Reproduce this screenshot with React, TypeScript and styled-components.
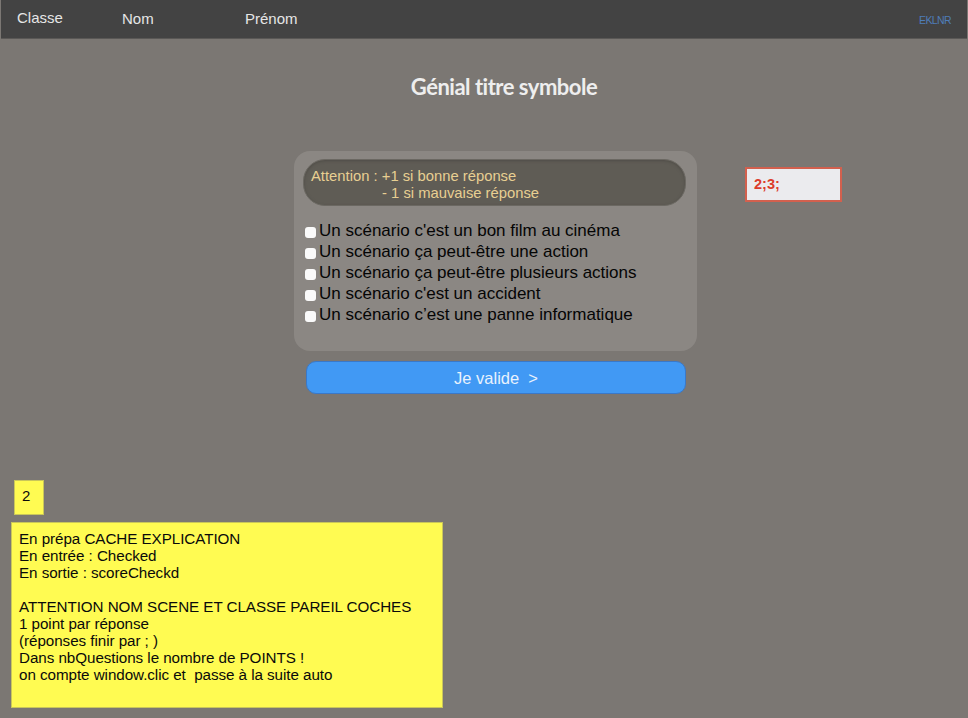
import * as React from "react";
import styled, { createGlobalStyle } from "styled-components";

const GlobalStyle = createGlobalStyle`
  html, body {
    margin: 0;
    padding: 0;
    background: #7b7773;
    font-family: "Liberation Sans", Arial, sans-serif;
  }
`;

const Page = styled.div`
  width: 968px;
  height: 718px;
  overflow: hidden;
  background: #7b7773;
`;

const TopBar = styled.div`
  height: 38px;
  margin: 0 1px;
  display: flex;
  align-items: center;
  background: #434343;
  border-bottom: 1px solid #5a5856;
`;

const BarLabel = styled.span<{ $width: number; $lift?: number }>`
  width: ${(p) => p.$width}px;
  padding-bottom: ${(p) => p.$lift ?? 0}px;
  color: #e6e6e6;
  font-size: 15px;
`;

const BarCode = styled.span`
  margin-left: auto;
  margin-right: 16px;
  padding-top: 1px;
  color: #4f7db8;
  font-size: 10.5px;
  letter-spacing: -0.6px;
`;

const Title = styled.h1`
  margin: 33px 0 0 40px;
  height: 30px;
  text-align: center;
  color: #eeeeee;
  font-family: Lato, sans-serif;
  font-size: 22px;
  font-weight: 700;
  line-height: 30px;
  letter-spacing: -0.5px;
`;

const QuizRow = styled.div`
  display: flex;
  align-items: flex-start;
  margin-top: 49px;
  padding-left: 294px;
`;

const Column = styled.div`
  width: 403px;
  display: flex;
  flex-direction: column;
`;

const Card = styled.div`
  height: 200px;
  box-sizing: border-box;
  padding: 8px 11px 0 9px;
  background: #8b8783;
  border-radius: 16px;
`;

const Notice = styled.div`
  height: 47px;
  box-sizing: border-box;
  padding: 8px 7px 0;
  background: #5f5c55;
  border: 1px solid #6b6862;
  border-radius: 22px;
  box-shadow: inset 0 1px 3px #4f4c47;
  color: #e8cf92;
  font-size: 14.8px;
  line-height: 17px;
`;

const NoticeLine = styled.div<{ $indent?: number }>`
  padding-left: ${(p) => p.$indent ?? 0}px;
  white-space: pre;
`;

const Answers = styled.div`
  margin-top: 15px;
  display: flex;
  flex-direction: column;
`;

const Answer = styled.label`
  height: 21px;
  display: flex;
  align-items: flex-start;
  color: #050505;
  font-size: 17px;
  line-height: 20px;
  white-space: nowrap;
`;

const Box = styled.span`
  flex: none;
  width: 11px;
  height: 11px;
  margin: 6px 3px 0 2px;
  background: #fafafa;
  border-radius: 3px;
`;

const ValidateButton = styled.button`
  align-self: flex-start;
  width: 380px;
  height: 33px;
  margin: 10px 0 0 12px;
  padding: 2px 0 0;
  background: #4199f4;
  border: 1px solid #3a78c8;
  border-radius: 10px;
  color: #e8f2fd;
  font-family: inherit;
  font-size: 16.5px;
  white-space: pre;
`;

const ScoreBox = styled.div`
  width: 97px;
  height: 35px;
  box-sizing: border-box;
  margin: 16px 0 0 48px;
  padding-left: 7px;
  background: #ebebee;
  border: 2px solid #d2604e;
  color: #dc3c2c;
  font-size: 14.5px;
  font-weight: 700;
  line-height: 30px;
`;

const Sticky = styled.div`
  background: #fffb52;
  border: 1px solid #c9c65a;
  box-sizing: border-box;
  color: #0a0a0a;
`;

const CountNote = styled(Sticky)`
  width: 30px;
  height: 35px;
  margin: 86px 0 0 14px;
  padding: 6px 0 0 7px;
  font-size: 15px;
  line-height: 17px;
`;

const ExplainNote = styled(Sticky)`
  width: 432px;
  height: 186px;
  margin: 7px 0 0 11px;
  padding: 7px 0 0 7px;
  font-size: 15.2px;
  line-height: 17px;
  letter-spacing: -0.05px;
  white-space: pre;
`;

const answers = [
  "Un scénario c'est un bon film au cinéma",
  "Un scénario ça peut-être une action",
  "Un scénario ça peut-être plusieurs actions",
  "Un scénario c'est un accident",
  "Un scénario c’est une panne informatique",
];

const explanation = [
  "En prépa CACHE EXPLICATION",
  "En entrée : Checked",
  "En sortie : scoreCheckd",
  "",
  "ATTENTION NOM SCENE ET CLASSE PAREIL COCHES",
  "1 point par réponse",
  "(réponses finir par ; )",
  "Dans nbQuestions le nombre de POINTS !",
  "on compte window.clic et  passe à la suite auto",
];

const App: React.FC = () => {
  return (
    <Page>
      <GlobalStyle />
      <TopBar>
        <BarLabel $width={16} />
        <BarLabel $width={105} $lift={4}>Classe</BarLabel>
        <BarLabel $width={123} $lift={2}>Nom</BarLabel>
        <BarLabel $width={80} $lift={2}>Prénom</BarLabel>
        <BarCode>EKLNR</BarCode>
      </TopBar>
      <Title>Génial titre symbole</Title>
      <QuizRow>
        <Column>
          <Card>
            <Notice>
              <NoticeLine>Attention : +1 si bonne réponse</NoticeLine>
              <NoticeLine $indent={71}>- 1 si mauvaise réponse</NoticeLine>
            </Notice>
            <Answers>
              {answers.map((text) => (
                <Answer key={text}>
                  <Box />
                  {text}
                </Answer>
              ))}
            </Answers>
          </Card>
          <ValidateButton>Je valide  &gt;</ValidateButton>
        </Column>
        <ScoreBox>2;3;</ScoreBox>
      </QuizRow>
      <CountNote>2</CountNote>
      <ExplainNote>{explanation.join("\n")}</ExplainNote>
    </Page>
  );
};

export default App;
